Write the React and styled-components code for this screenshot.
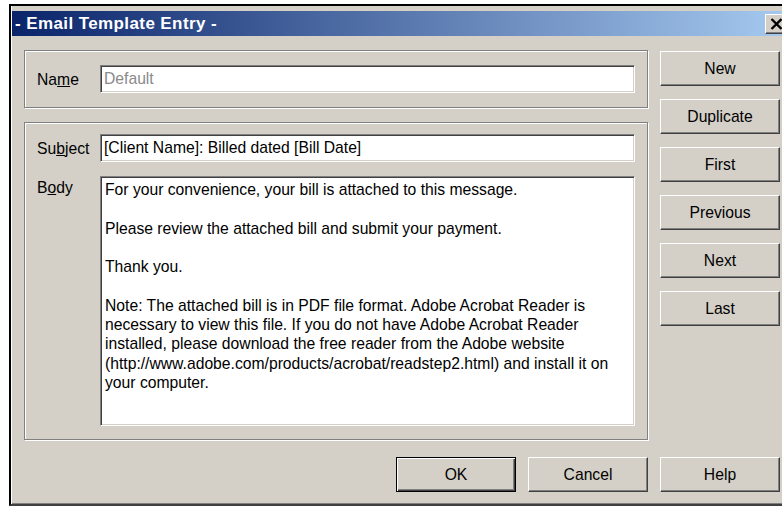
import React from 'react';
import styled, { createGlobalStyle, css } from 'styled-components';

const FACE = '#d4d0c8';
const SHADOW = '#808080';
const DARK = '#404040';
const FONT = '"Liberation Sans", Arial, sans-serif';
const TEXT_SIZE = '15.7px';

const BODY_TEXT = [
  'For your convenience, your bill is attached to this message.',
  '',
  'Please review the attached bill and submit your payment.',
  '',
  'Thank you.',
  '',
  'Note: The attached bill is in PDF file format. Adobe Acrobat Reader is',
  'necessary to view this file. If you do not have Adobe Acrobat Reader',
  'installed, please download the free reader from the Adobe website',
  '(http://www.adobe.com/products/acrobat/readstep2.html) and install it on',
  'your computer.',
].join('\n');

const NAV_BUTTONS = ['New', 'Duplicate', 'First', 'Previous', 'Next', 'Last'];

const GlobalStyle = createGlobalStyle`
  html, body {
    margin: 0;
    padding: 0;
    background: #ffffff;
    overflow: hidden;
  }
  body {
    font-family: ${FONT};
  }
`;

function CloseGlyph() {
  return (
    <svg width="13" height="12" viewBox="0 0 13 12">
      <path d="M1.5 1 L11.5 11 M11.5 1 L1.5 11" stroke="#000" strokeWidth="2.4" />
    </svg>
  );
}

class App extends React.Component {
  render() {
    return (
      <>
        <GlobalStyle />
        <Window>
          <TitleBar>
            <TitleText>- Email Template Entry -</TitleText>
            <CloseButton>
              <CloseGlyph />
            </CloseButton>
          </TitleBar>

          <Main>
            <FormColumn>
              <GroupBox $pad="14px 12px 14px 12px">
                <FieldLabel>
                  Na<u>m</u>e
                </FieldLabel>
                <TextField $muted>Default</TextField>
              </GroupBox>

              <GroupBox $pad="11px 12px 13px 12px">
                <FieldLabel>
                  Su<u>b</u>ject
                </FieldLabel>
                <TextField>[Client Name]: Billed dated [Bill Date]</TextField>
                <FieldLabel $top>
                  B<u>o</u>dy
                </FieldLabel>
                <MemoField>{BODY_TEXT}</MemoField>
              </GroupBox>
            </FormColumn>

            <ButtonColumn>
              {NAV_BUTTONS.map((label) => (
                <Button key={label}>{label}</Button>
              ))}
            </ButtonColumn>
          </Main>

          <Footer>
            <Button $default>OK</Button>
            <Button>Cancel</Button>
            <Button>Help</Button>
          </Footer>
        </Window>
      </>
    );
  }
}

const Window = styled.div`
  box-sizing: border-box;
  width: 783px;
  height: 502px;
  margin: 4px 0 0 9px;
  padding-top: 5px;
  background: ${FACE};
  border-top: 2px solid #000000;
  border-left: 2px solid #000000;
  border-bottom: 2px solid ${DARK};
  box-shadow: inset 1px 0 #ffffff, inset 0 -1px ${SHADOW};
  display: flex;
  flex-direction: column;
`;

const TitleBar = styled.div`
  height: 25px;
  margin: 0 2px 0 1px;
  padding: 0 3px;
  background: linear-gradient(to right, #0a246a, #a6caf0);
  display: flex;
  align-items: center;
`;

const TitleText = styled.div`
  color: #ffffff;
  font-weight: bold;
  font-size: 17px;
  letter-spacing: 0.4px;
  white-space: nowrap;
`;

const CloseButton = styled.div`
  box-sizing: border-box;
  margin-left: auto;
  width: 22px;
  height: 20px;
  background: ${FACE};
  border: 1px solid;
  border-color: #ffffff ${DARK} ${DARK} #ffffff;
  box-shadow: inset -1px -1px ${SHADOW};
  display: flex;
  align-items: center;
  justify-content: center;
`;

const Main = styled.div`
  display: flex;
  gap: 12px;
  margin-top: 14px;
  padding: 0 12px 0 13px;
`;

const FormColumn = styled.div`
  width: 624px;
  display: flex;
  flex-direction: column;
  gap: 14px;
`;

const GroupBox = styled.div`
  box-sizing: border-box;
  padding: ${(p) => p.$pad};
  border: 1px solid ${SHADOW};
  box-shadow: inset 1px 1px #ffffff, 1px 1px #ffffff;
  display: grid;
  grid-template-columns: 63px 1fr;
  row-gap: 14px;
`;

const FieldLabel = styled.div`
  font-size: ${TEXT_SIZE};
  line-height: 19px;
  color: #000000;
  align-self: ${(p) => (p.$top ? 'start' : 'center')};
  margin-top: ${(p) => (p.$top ? '2px' : '0')};
  white-space: nowrap;
`;

const sunken = css`
  box-sizing: border-box;
  background: #ffffff;
  border: 1px solid;
  border-color: ${SHADOW} #ffffff #ffffff ${SHADOW};
  box-shadow: inset 1px 1px ${DARK}, inset -1px -1px ${FACE};
  font-size: ${TEXT_SIZE};
`;

const TextField = styled.div`
  ${sunken};
  height: 28px;
  padding: 0 3px;
  display: flex;
  align-items: center;
  color: ${(p) => (p.$muted ? '#8a8a8a' : '#000000')};
  white-space: nowrap;
`;

const MemoField = styled.div`
  ${sunken};
  height: 250px;
  padding: 3px 4px;
  line-height: 19.3px;
  color: #000000;
  white-space: pre;
  overflow: hidden;
`;

const ButtonColumn = styled.div`
  width: 120px;
  padding-top: 1px;
  display: flex;
  flex-direction: column;
  gap: 13px;
`;

const Button = styled.button`
  box-sizing: border-box;
  width: 120px;
  height: 35px;
  margin: 0;
  padding: 0;
  font-family: ${FONT};
  font-size: ${TEXT_SIZE};
  color: #000000;
  background: ${FACE};
  border: 1px solid;
  border-color: #ffffff ${DARK} ${DARK} #ffffff;
  box-shadow: inset -1px -1px ${SHADOW};

  ${(p) =>
    p.$default &&
    css`
      border-color: #000000;
      box-shadow: inset 1px 1px #ffffff, inset -1px -1px ${DARK},
        inset -2px -2px ${SHADOW};
    `}
`;

const Footer = styled.div`
  display: flex;
  justify-content: flex-end;
  gap: 12px;
  margin-top: 17px;
  padding-right: 12px;
`;

export default App;
